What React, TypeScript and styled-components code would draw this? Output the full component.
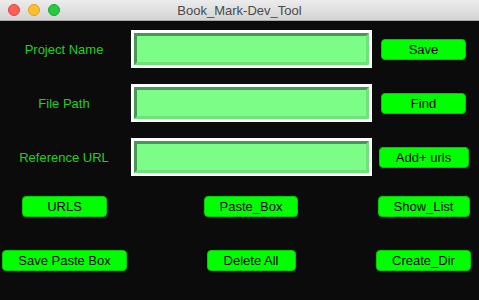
import React from "react";
import styled, { createGlobalStyle } from "styled-components";

const Global = createGlobalStyle`
  html, body { margin: 0; padding: 0; background: #0b0b0b; }
  body { font-family: "Liberation Sans", Arial, sans-serif; }
  * { box-sizing: border-box; }
`;

const Window = styled.div`
  width: 479px;
  height: 300px;
  display: flex;
  flex-direction: column;
  background: #0b0b0b;
  overflow: hidden;
`;

const TitleBar = styled.div`
  height: 21px;
  flex: none;
  position: relative;
  display: flex;
  align-items: center;
  justify-content: center;
  background: linear-gradient(#ececec, #d4d4d4);
  border-bottom: 1px solid #a9a9a9;
`;

const Lights = styled.div`
  position: absolute;
  left: 8px;
  top: 4px;
  display: flex;
  gap: 8px;
`;

const Light = styled.span<{ $c: string; $b: string }>`
  width: 12px;
  height: 12px;
  border-radius: 50%;
  background: ${(p) => p.$c};
  border: 0.5px solid ${(p) => p.$b};
`;

const Title = styled.div`
  font-size: 13px;
  color: #4a4a4a;
`;

const Body = styled.div`
  padding-top: 9px;
  display: flex;
  flex-direction: column;
`;

const Form = styled.div`
  display: grid;
  grid-template-columns: 131px 241px 103px;
  row-gap: 16px;
  align-items: center;
`;

const Label = styled.div`
  justify-self: center;
  padding-right: 3px;
  font-size: 13px;
  color: #1ed01e;
`;

const EntryFrame = styled.div`
  width: 241px;
  height: 38px;
  border: 3px solid #ffffff;
  display: flex;
`;

const EntryField = styled.div`
  flex: 1;
  background: #7cfd88;
  border-style: solid;
  border-width: 3px;
  border-color: #4a9657 #6de37a #6de37a #4a9657;
`;

const Btn = styled.div<{ $w: number }>`
  justify-self: center;
  width: ${(p) => p.$w}px;
  height: 21px;
  display: flex;
  align-items: center;
  justify-content: center;
  background: #00ff00;
  border: 1px solid #00cc00;
  border-radius: 4px;
  font-size: 13px;
  color: #000;
`;

const Actions = styled.div`
  margin-top: 20px;
  display: grid;
  grid-template-columns: 129px 244px 101px;
  row-gap: 33px;
`;

const fields = [
  { label: "Project Name", btn: "Save", w: 85 },
  { label: "File Path", btn: "Find", w: 85 },
  { label: "Reference URL", btn: "Add+ urls", w: 90 },
];

const actions = [
  { t: "URLS", w: 85 },
  { t: "Paste_Box", w: 94 },
  { t: "Show_List", w: 92 },
  { t: "Save Paste Box", w: 125 },
  { t: "Delete All", w: 89 },
  { t: "Create_Dir", w: 95 },
];

export default function App() {
  return (
    <>
      <Global />
      <Window>
        <TitleBar>
          <Lights>
            <Light $c="#fe5f57" $b="#e0443e" />
            <Light $c="#febc2e" $b="#dea123" />
            <Light $c="#28c840" $b="#1aab29" />
          </Lights>
          <Title>Book_Mark-Dev_Tool</Title>
        </TitleBar>
        <Body>
          <Form>
            {fields.map((f) => (
              <React.Fragment key={f.label}>
                <Label>{f.label}</Label>
                <EntryFrame>
                  <EntryField />
                </EntryFrame>
                <Btn $w={f.w}>{f.btn}</Btn>
              </React.Fragment>
            ))}
          </Form>
          <Actions>
            {actions.map((a) => (
              <Btn key={a.t} $w={a.w}>
                {a.t}
              </Btn>
            ))}
          </Actions>
        </Body>
      </Window>
    </>
  );
}
